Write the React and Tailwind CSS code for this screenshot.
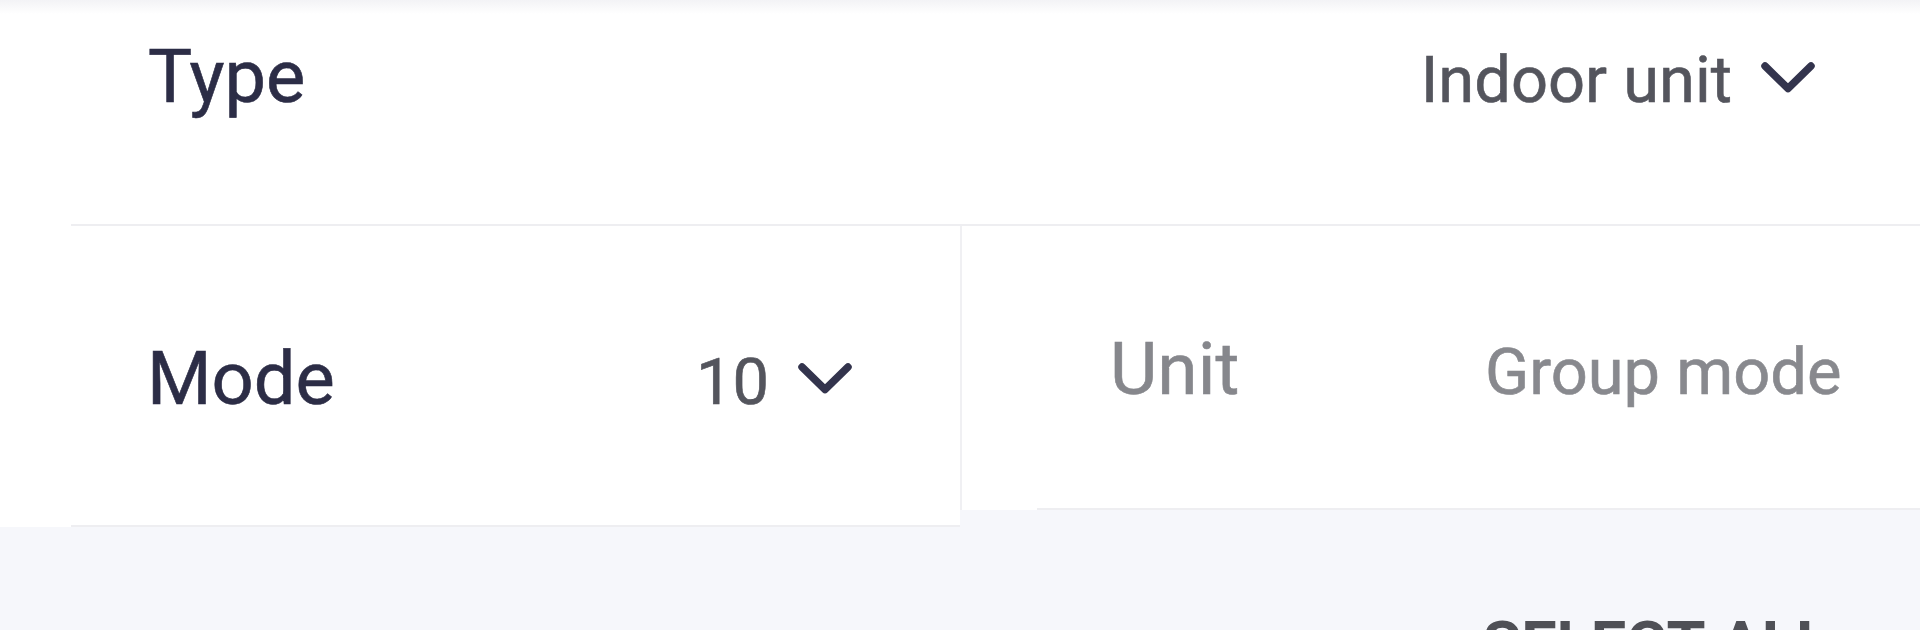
import React from "react";

function Chevron({ className = "" }) {
  return (
    <svg
      width="54"
      height="32"
      viewBox="0 0 54 32"
      className={className}
      fill="none"
      stroke="#33344d"
      strokeWidth="7.5"
      strokeLinecap="round"
      strokeLinejoin="round"
    >
      <polyline points="4,4 27,26.5 50,4" />
    </svg>
  );
}

export default function App() {
  return (
    <div
      className="w-[1920px] h-[630px] overflow-hidden bg-[#f6f7fb]"
      style={{ fontFamily: "Roboto, 'Noto Sans', 'Liberation Sans', sans-serif" }}
    >
      {/* top strip (cut-off header) */}
      <div className="h-[14px] bg-gradient-to-b from-[#f3f3f6] to-white" />

      {/* Row 1: Type */}
      <div className="bg-white pl-[71px]">
        <div className="h-[212px] border-b-2 border-[#eeeef1] pl-[77px] pr-[105px] pt-[26px]">
          <div className="flex items-baseline justify-between">
            <span className="text-[74px] leading-none text-[#2c2d46] [-webkit-text-stroke:0.6px_#2c2d46]">Type</span>
            <div className="flex items-center gap-[29px]">
              <span className="text-[65px] leading-none text-[#54555d] [-webkit-text-stroke:0.6px_#54555d]">Indoor unit</span>
              <Chevron className="mb-[6px]" />
            </div>
          </div>
        </div>
      </div>

      {/* Row 2: Mode + Unit/Group mode */}
      <div className="flex items-start">
        <div className="w-[960px] h-[301px] bg-white pl-[71px]">
          <div className="h-full border-b-2 border-[#eeeef1] pl-[76px] pr-[108px] flex items-center">
            <div className="flex w-full items-baseline justify-between pt-[6px]">
              <span className="text-[74px] leading-none text-[#2c2d46] [-webkit-text-stroke:0.6px_#2c2d46]">Mode</span>
              <div className="flex items-center gap-[29px]">
                <span className="text-[65px] leading-none text-[#54555d] [-webkit-text-stroke:0.6px_#54555d]">10</span>
                <Chevron className="mb-[6px]" />
              </div>
            </div>
          </div>
        </div>
        <div className="flex-1 h-[284px] bg-white border-l-2 border-[#f0f0f3]">
          <div className="ml-[75px] h-full border-b-2 border-[#eeeef1] flex items-center">
            <div className="flex items-baseline pt-[4px]">
              <span className="w-[448px] pl-[73px] text-[73px] leading-none text-[#86878c] [-webkit-text-stroke:0.6px_#86878c]">Unit</span>
              <span className="text-[65px] leading-none text-[#88898e] [-webkit-text-stroke:0.6px_#88898e]">Group mode</span>
            </div>
          </div>
        </div>
      </div>

      {/* Bottom gray area */}
      <div className="flex justify-end pr-[90px] pt-[86px]">
        <span className="text-[63px] leading-none font-bold text-[#4f5056]">SELECT ALL</span>
      </div>
    </div>
  );
}
